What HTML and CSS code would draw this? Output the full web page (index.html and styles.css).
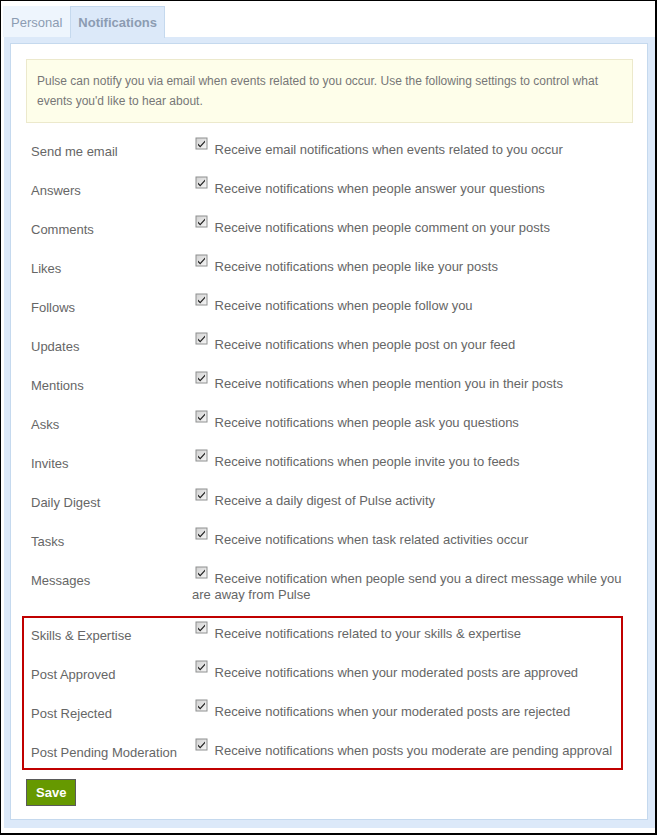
FILE: index.html
```html
<!DOCTYPE html>
<html>
<head>
<meta charset="utf-8">
<link rel="stylesheet" href="styles.css">
</head>
<body>
<div class="frame">
  <div class="tabs">
    <div class="tab">Personal</div>
    <div class="tab active">Notifications</div>
  </div>
  <div class="panel">
    <div class="inner">
      <div class="info">Pulse can notify you via email when events related to you occur. Use the following settings to control what events you'd like to hear about.</div>
      <div class="rows">
        <div class="row"><div class="label">Send me email</div><div class="desc"><svg class="cb" viewBox="0 0 13 13"><use href="#cbx"/></svg> Receive email notifications when events related to you occur</div></div>
        <div class="row"><div class="label">Answers</div><div class="desc"><svg class="cb" viewBox="0 0 13 13"><use href="#cbx"/></svg> Receive notifications when people answer your questions</div></div>
        <div class="row"><div class="label">Comments</div><div class="desc"><svg class="cb" viewBox="0 0 13 13"><use href="#cbx"/></svg> Receive notifications when people comment on your posts</div></div>
        <div class="row"><div class="label">Likes</div><div class="desc"><svg class="cb" viewBox="0 0 13 13"><use href="#cbx"/></svg> Receive notifications when people like your posts</div></div>
        <div class="row"><div class="label">Follows</div><div class="desc"><svg class="cb" viewBox="0 0 13 13"><use href="#cbx"/></svg> Receive notifications when people follow you</div></div>
        <div class="row"><div class="label">Updates</div><div class="desc"><svg class="cb" viewBox="0 0 13 13"><use href="#cbx"/></svg> Receive notifications when people post on your feed</div></div>
        <div class="row"><div class="label">Mentions</div><div class="desc"><svg class="cb" viewBox="0 0 13 13"><use href="#cbx"/></svg> Receive notifications when people mention you in their posts</div></div>
        <div class="row"><div class="label">Asks</div><div class="desc"><svg class="cb" viewBox="0 0 13 13"><use href="#cbx"/></svg> Receive notifications when people ask you questions</div></div>
        <div class="row"><div class="label">Invites</div><div class="desc"><svg class="cb" viewBox="0 0 13 13"><use href="#cbx"/></svg> Receive notifications when people invite you to feeds</div></div>
        <div class="row"><div class="label">Daily Digest</div><div class="desc"><svg class="cb" viewBox="0 0 13 13"><use href="#cbx"/></svg> Receive a daily digest of Pulse activity</div></div>
        <div class="row"><div class="label">Tasks</div><div class="desc"><svg class="cb" viewBox="0 0 13 13"><use href="#cbx"/></svg> Receive notifications when task related activities occur</div></div>
        <div class="row"><div class="label">Messages</div><div class="desc"><svg class="cb" viewBox="0 0 13 13"><use href="#cbx"/></svg> Receive notification when people send you a direct message while you are away from Pulse</div></div>
        <div class="group">
          <div class="row"><div class="label">Skills &amp; Expertise</div><div class="desc"><svg class="cb" viewBox="0 0 13 13"><use href="#cbx"/></svg> Receive notifications related to your skills &amp; expertise</div></div>
          <div class="row"><div class="label">Post Approved</div><div class="desc"><svg class="cb" viewBox="0 0 13 13"><use href="#cbx"/></svg> Receive notifications when your moderated posts are approved</div></div>
          <div class="row"><div class="label">Post Rejected</div><div class="desc"><svg class="cb" viewBox="0 0 13 13"><use href="#cbx"/></svg> Receive notifications when your moderated posts are rejected</div></div>
          <div class="row"><div class="label">Post Pending Moderation</div><div class="desc"><svg class="cb" viewBox="0 0 13 13"><use href="#cbx"/></svg> Receive notifications when posts you moderate are pending approval</div></div>
        </div>
      </div>
      <button class="save">Save</button>
    </div>
  </div>
</div>
<svg width="0" height="0" class="defs">
  <defs>
    <linearGradient id="cbg" x1="0" y1="0" x2="1" y2="1">
      <stop offset="0" stop-color="#d2d2d2"/>
      <stop offset="1" stop-color="#f6f6f6"/>
    </linearGradient>
    <g id="cbx">
      <rect x="0.5" y="0.5" width="12" height="12" fill="#8e8f8f"/>
      <rect x="1.5" y="1.5" width="10" height="10" fill="url(#cbg)"/>
      <path d="M3 6.5 L5.2 8.8 L10 3.5 L10 5.3 L5.2 10.6 L3 8.3 Z" fill="#222"/>
    </g>
  </defs>
</svg>
</body>
</html>
```
FILE: styles.css
```css
html, body {
  margin: 0;
  padding: 0;
  background: #fff;
}
.defs {
  position: absolute;
  width: 0;
  height: 0;
}
.frame {
  box-sizing: border-box;
  width: 657px;
  height: 835px;
  border-top: 1px solid #000;
  border-left: 1px solid #000;
  border-right: 2px solid #000;
  border-bottom: 2px solid #000;
  font-family: "Liberation Sans", Arial, sans-serif;
  color: #666;
  overflow: hidden;
}
.tabs {
  display: flex;
  margin: 5px 0 0 2px;
  height: 31px;
}
.tab {
  box-sizing: border-box;
  height: 31px;
  line-height: 33px;
  padding: 0 8px;
  font-size: 13px;
  color: #8c9cb2;
  background: #eef5fd;
}
.tab.active {
  background: #dce9f9;
  border: 1px solid #c5d9ee;
  border-bottom: none;
  line-height: 32px;
  padding: 0 7px;
  font-weight: bold;
  height: 32px;
}
.panel {
  margin-left: 3px;
  background: #dce9f9;
  padding: 6px 7px 8px 6px;
}
.inner {
  background: #fff;
  border: 1px solid #c5d9ee;
  padding: 15px 14px 13px 15px;
}
.info {
  background: #fefeea;
  border: 1px solid #ece9cc;
  padding: 11px 10px;
  font-size: 12px;
  line-height: 20px;
  color: #777;
}
.rows {
  margin-top: 8px;
}
.row {
  display: grid;
  grid-template-columns: 161px 1fr;
  padding: 11px 5px 10px 5px;
  font-size: 13px;
  line-height: 16px;
}
.label {
  padding-top: 2px;
}
.cb {
  display: inline-block;
  width: 13px;
  height: 13px;
  vertical-align: 4px;
  margin: -5px 3px 0 3px;
}
.group {
  border: 2px solid #c00000;
  margin: 3px 10px 0 -4px;
  padding-left: 2px;
}
.group .row:first-child {
  padding-top: 8px;
}
.group .row:last-child {
  padding-bottom: 7px;
}
.save {
  display: block;
  margin-top: 9px;
  height: 27px;
  padding: 0 9px;
  background: #669900;
  border: 1px solid #5a5a5a;
  color: #fff;
  font-family: "Liberation Sans", Arial, sans-serif;
  font-weight: bold;
  font-size: 13px;
  line-height: 25px;
}
```
